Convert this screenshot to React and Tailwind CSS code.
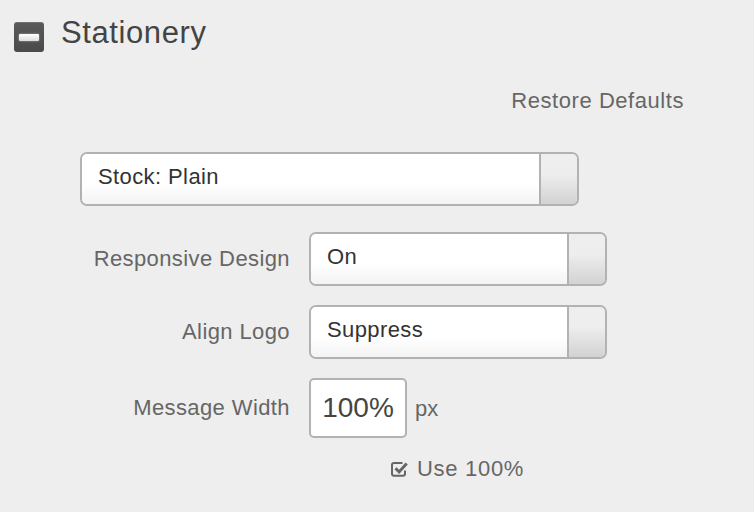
import React from 'react';

function MinusBox() {
  return (
    <div className="flex h-[30px] w-[30px] items-center justify-center rounded-[3px] bg-gradient-to-b from-[#5a5a5a] to-[#4a4a4a] shadow-[inset_0_1px_0_rgba(255,255,255,0.15)]">
      <div className="h-[7px] w-[20px] rounded-[1px] bg-gradient-to-b from-[#ffffff] to-[#dcdcdc] shadow-[0_0_2px_rgba(255,255,255,0.6)]" />
    </div>
  );
}

function Select({ value, width }) {
  return (
    <div
      className={`flex h-[54px] ${width} overflow-hidden rounded-[7px] border-2 border-[#b2b2b2]`}
    >
      <div className="flex flex-1 items-center bg-gradient-to-b from-white from-60% to-[#f3f3f3] pb-[6px] pl-[16px] text-[22px] tracking-[0.4px] text-[#333]">
        {value}
      </div>
      <div className="w-[38px] border-l-2 border-[#b2b2b2] bg-gradient-to-b from-[#eeeeee] from-40% to-[#d2d2d2]" />
    </div>
  );
}

// square with a tick breaking out of the top right corner
function CheckSquare() {
  return (
    <svg className="shrink-0" width="17" height="16" viewBox="0 0 17 16" fill="none">
      <path
        d="M14 9.5v3.3a2 2 0 0 1-2 2H3a2 2 0 0 1-2-2V4a2 2 0 0 1 2-2h8.5"
        stroke="#666"
        strokeWidth="2"
      />
      <path d="M4.5 7.3l3.6 3.6 7.6-8.4" stroke="#666" strokeWidth="3" />
    </svg>
  );
}

export default function App() {
  return (
    <div
      className="h-[512px] w-[754px] overflow-hidden bg-[#eeeeee]"
      style={{ fontFamily: '"Liberation Sans", Arial, sans-serif' }}
    >
      <header className="flex items-start gap-[17px] pl-[14px] pt-[15px]">
        <div className="mt-[7px]">
          <MinusBox />
        </div>
        <h1 className="text-[31px] leading-[36px] tracking-[0.6px] text-[#444]">Stationery</h1>
      </header>

      <div className="mt-[36px] flex justify-end pr-[70px]">
        <span className="text-[22px] leading-[26px] tracking-[0.55px] text-[#666]">Restore Defaults</span>
      </div>

      <div className="mt-[38px] pl-[80px]">
        <Select value="Stock: Plain" width="w-[499px]" />
      </div>

      <div className="mt-[26px] flex flex-col gap-[19px]">
        <div className="flex items-center">
          <label className="w-[290px] text-right text-[22px] leading-[26px] tracking-[0.4px] text-[#666]">
            Responsive Design
          </label>
          <div className="ml-[19px]">
            <Select value="On" width="w-[298px]" />
          </div>
        </div>

        <div className="flex items-center">
          <label className="w-[290px] text-right text-[22px] leading-[26px] tracking-[0.4px] text-[#666]">
            Align Logo
          </label>
          <div className="ml-[19px]">
            <Select value="Suppress" width="w-[298px]" />
          </div>
        </div>

        <div className="flex items-center">
          <label className="w-[290px] text-right text-[22px] leading-[26px] tracking-[0.4px] text-[#666]">
            Message Width
          </label>
          <div className="ml-[19px] flex h-[60px] w-[98px] items-center justify-center rounded-[5px] border-2 border-[#b2b2b2] bg-white text-[28px] text-[#444]">
            100%
          </div>
          <span className="ml-[8px] text-[22px] text-[#666]">px</span>
        </div>
      </div>

      <div className="mt-[18px] flex items-center gap-[9px] pl-[391px] text-[22px] leading-[26px] tracking-[0.7px] text-[#666]">
        <CheckSquare />
        <span>Use 100%</span>
      </div>
    </div>
  );
}
